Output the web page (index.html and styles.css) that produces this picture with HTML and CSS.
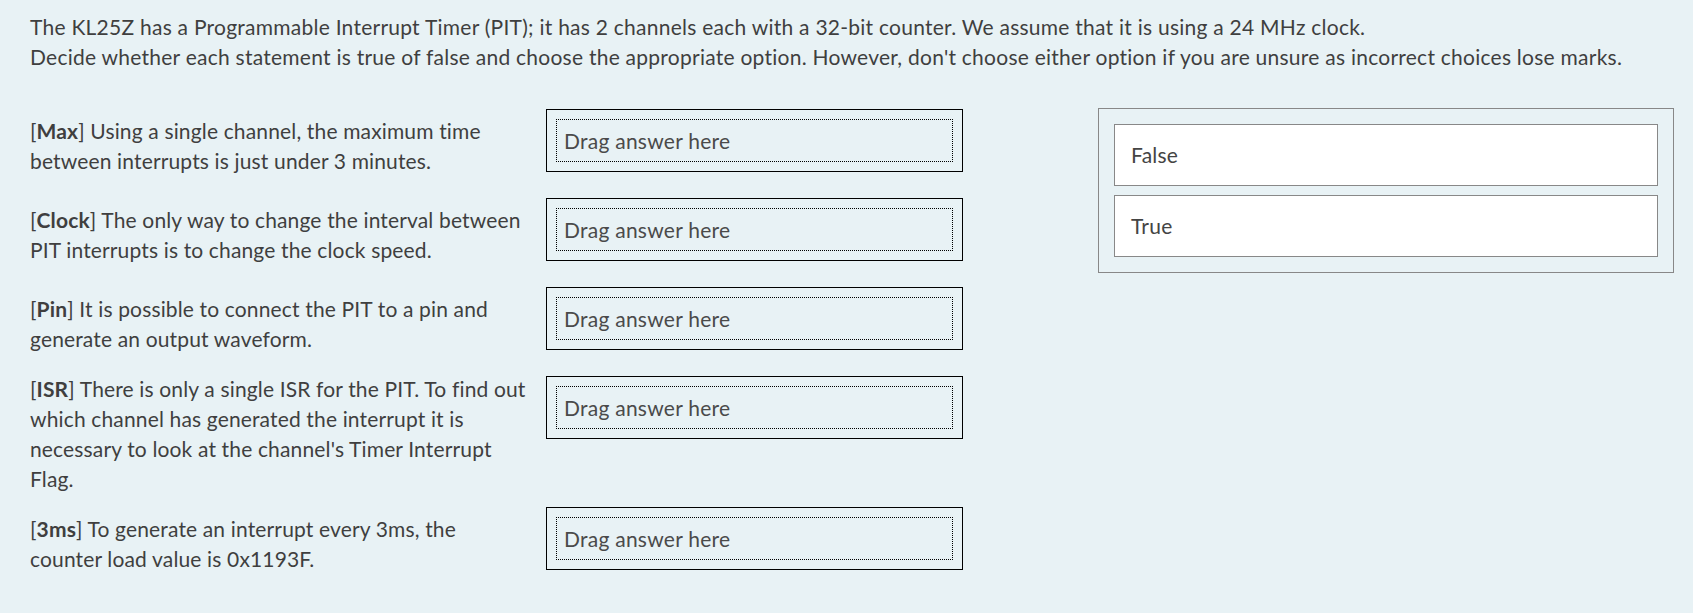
FILE: index.html
```html
<!DOCTYPE html>
<html>
<head>
<meta charset="utf-8">
<link rel="stylesheet" href="styles.css">
</head>
<body>
<div class="que">
  <div class="intro">
    <p>The KL25Z has a Programmable Interrupt Timer (PIT); it has 2 channels each with a 32-bit counter. We assume that it is using a 24 MHz clock.<br>Decide whether each statement is true of false and choose the appropriate option. However, don't choose either option if you are unsure as incorrect choices lose marks.</p>
  </div>
  <div class="main">
    <div class="rows">
      <div class="row">
        <div class="stmt">[<b>Max</b>] Using a single channel, the maximum time between interrupts is just under 3 minutes.</div>
        <div class="drop"><div class="drop-inner">Drag answer here</div></div>
      </div>
      <div class="row">
        <div class="stmt">[<b>Clock</b>] The only way to change the interval between PIT interrupts is to change the clock speed.</div>
        <div class="drop"><div class="drop-inner">Drag answer here</div></div>
      </div>
      <div class="row">
        <div class="stmt">[<b>Pin</b>] It is possible to connect the PIT to a pin and generate an output waveform.</div>
        <div class="drop"><div class="drop-inner">Drag answer here</div></div>
      </div>
      <div class="row">
        <div class="stmt">[<b>ISR</b>] There is only a single ISR for the PIT. To find out which channel has generated the interrupt it is necessary to look at the channel's Timer Interrupt Flag.</div>
        <div class="drop"><div class="drop-inner">Drag answer here</div></div>
      </div>
      <div class="row">
        <div class="stmt">[<b>3ms</b>] To generate an interrupt every 3ms, the counter load value is 0x1193F.</div>
        <div class="drop"><div class="drop-inner">Drag answer here</div></div>
      </div>
    </div>
    <div class="choices">
      <div class="choice">False</div>
      <div class="choice">True</div>
    </div>
  </div>
</div>
</body>
</html>
```
FILE: styles.css
```css
html, body {
  margin: 0;
  padding: 0;
  background: #e8f2f5;
}
body {
  font-family: "Lato", "Noto Sans", sans-serif;
  font-size: 21px;
  letter-spacing: 0.25px;
  line-height: 30px;
  color: #3f3f3f;
}
.que {
  padding: 12px 0 20px 30px;
}
.intro p {
  margin: 0;
}
.main {
  display: flex;
  align-items: flex-start;
  margin-top: 37px;
}
.rows {
  display: flex;
  flex-direction: column;
  gap: 11px;
  flex-shrink: 0;
}
.row {
  display: flex;
  min-height: 78px;
}
.stmt {
  width: 499px;
  flex-shrink: 0;
  align-self: center;
  letter-spacing: 0.15px;
  margin-top: -2px;
  margin-bottom: 2px;
}
.stmt b {
  font-weight: 700;
}
.drop {
  align-self: flex-start;
  flex-shrink: 0;
  margin-left: 17px;
  width: 397px;
  padding: 9px;
  border: 1px solid #000;
}
.drop-inner {
  border: 1px dotted #000;
  height: 41px;
  line-height: 41px;
  padding-left: 7px;
  color: #4a4a4a;
}
.choices {
  flex-shrink: 0;
  margin-left: 135px;
  margin-top: -1px;
  width: 544px;
  padding: 15px;
  border: 1px solid #888;
  display: flex;
  flex-direction: column;
  gap: 9px;
}
.choice {
  background: #fff;
  border: 1px solid #888;
  height: 60px;
  line-height: 60px;
  padding-left: 16px;
  color: #444;
}
```
